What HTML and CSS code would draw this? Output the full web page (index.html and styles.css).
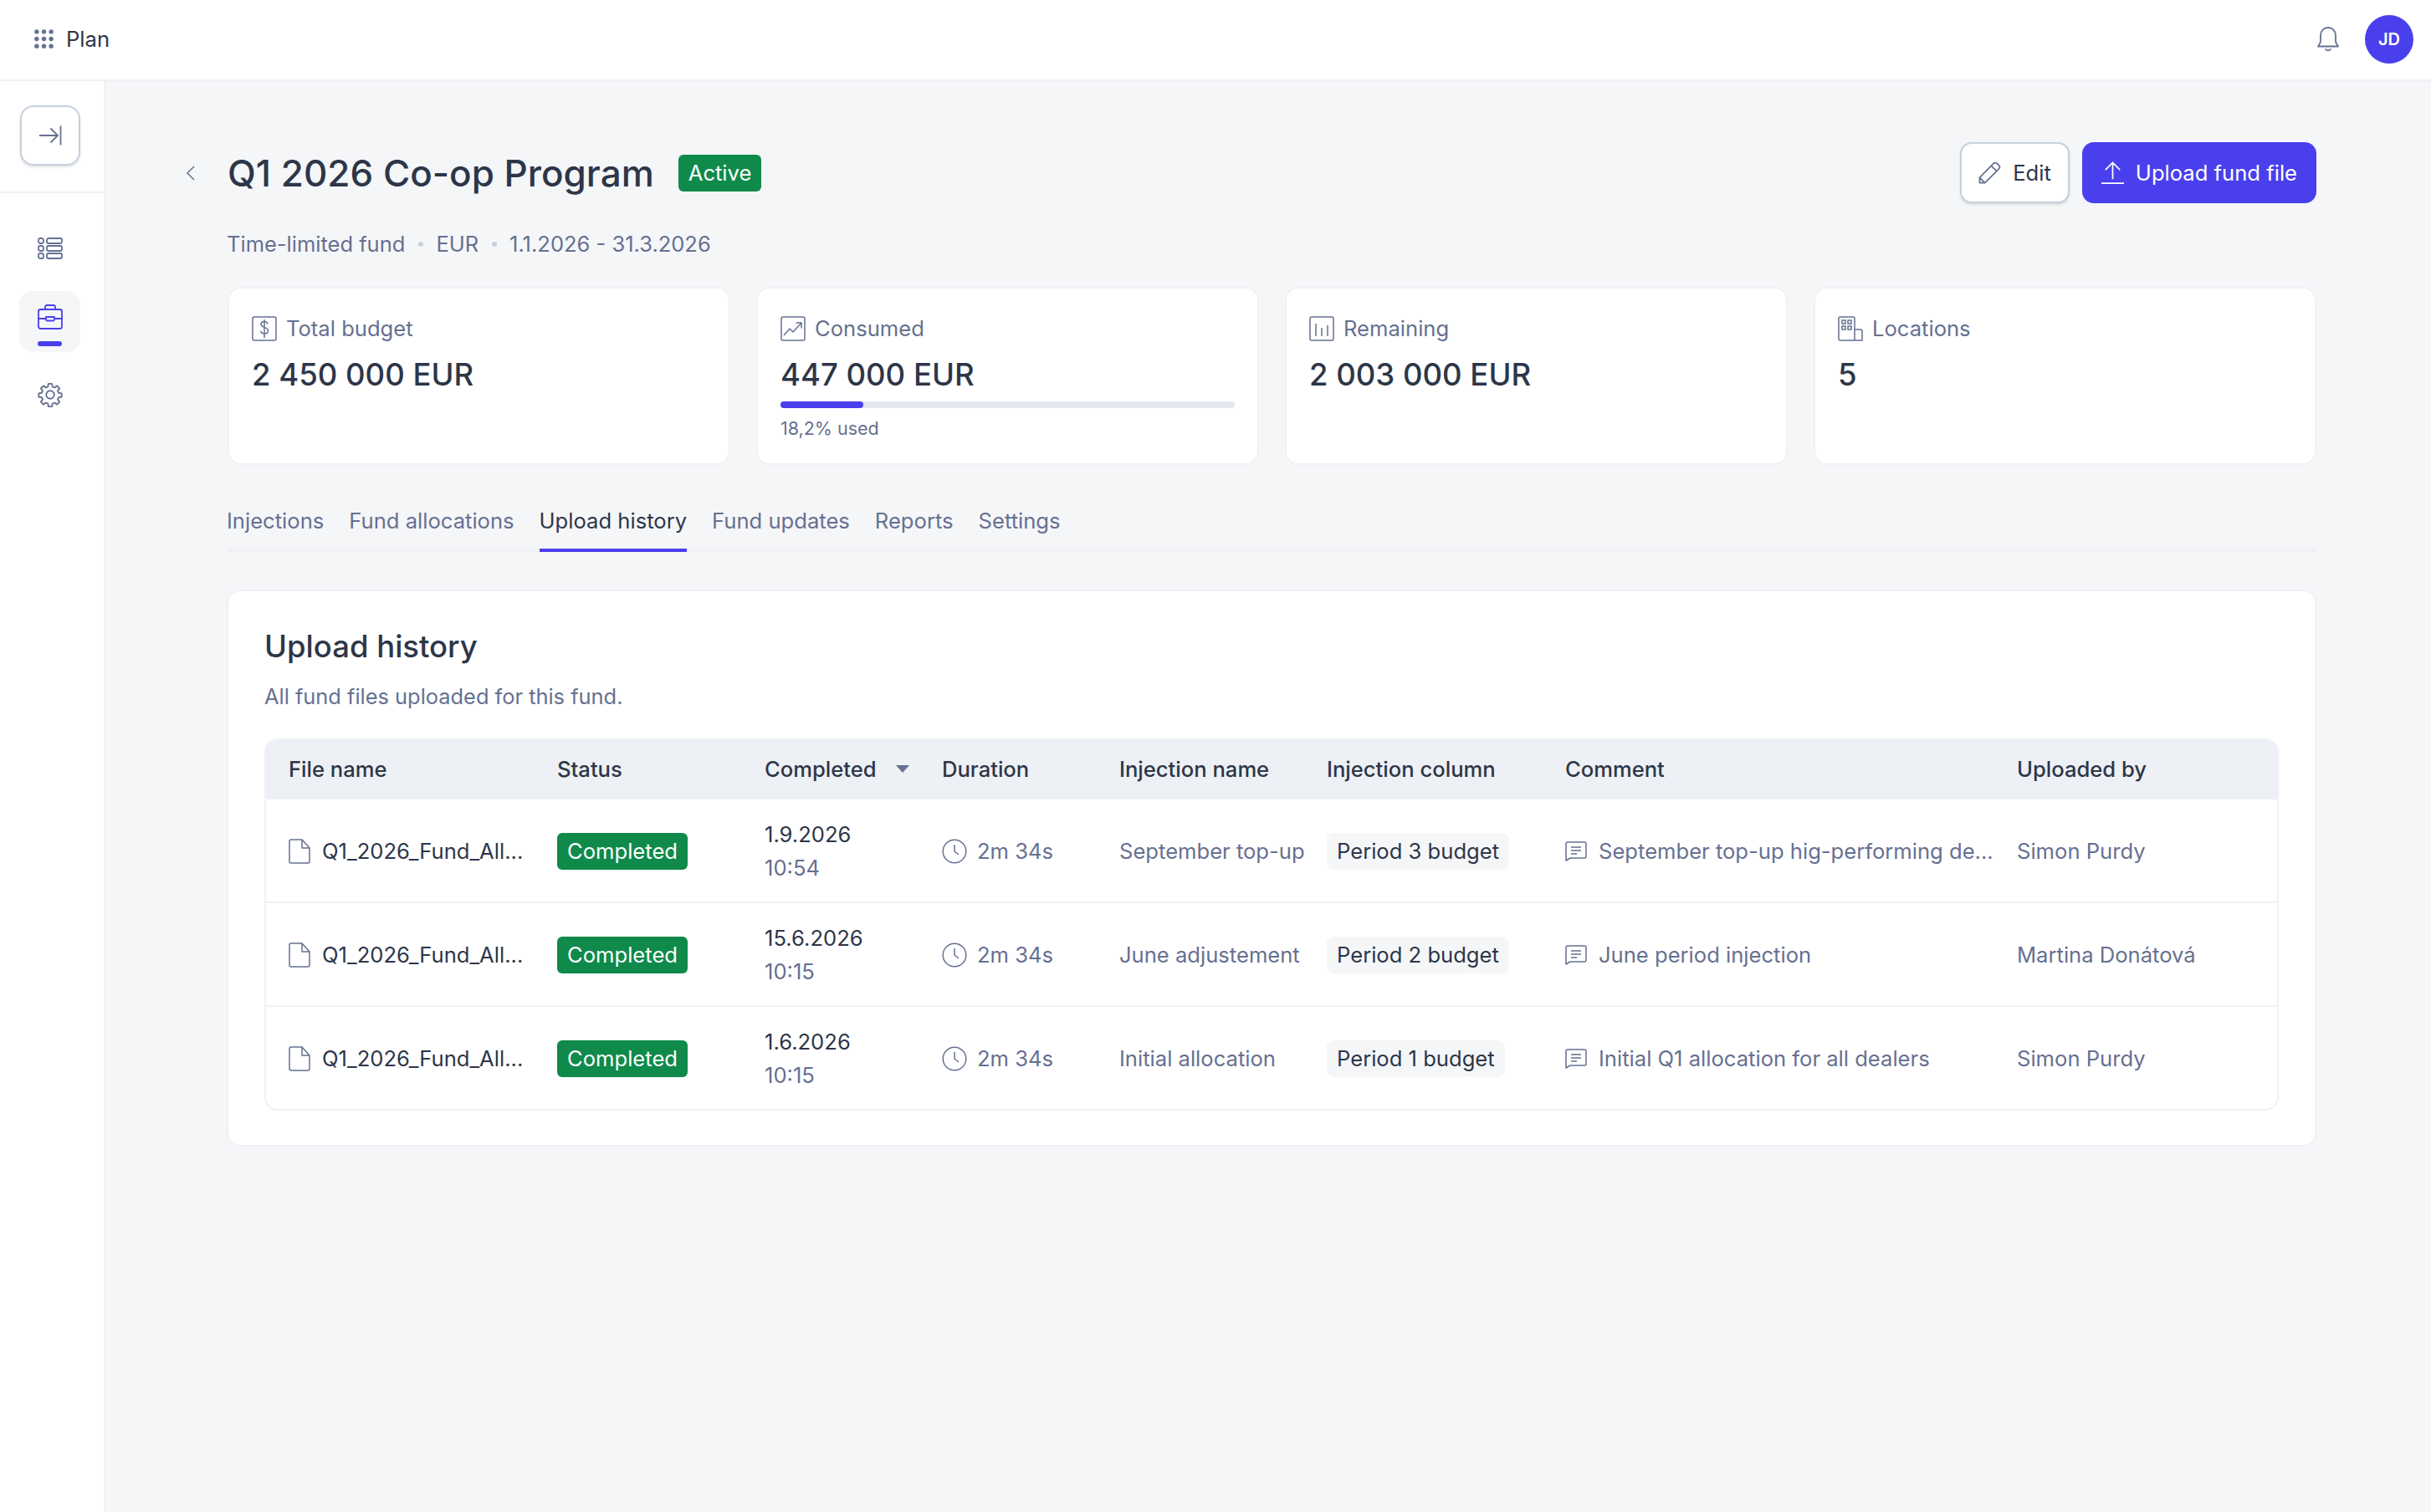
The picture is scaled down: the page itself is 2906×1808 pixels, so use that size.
FILE: index.html
```html
<!DOCTYPE html>
<html>
  <head>
    <meta charset="UTF-8">
    <meta name="viewport" content="width=device-width, initial-scale=1.0">
    <title>Q1 2026 Co-op Program</title>
    <link rel="stylesheet" href="styles.css">
  </head>
  <body>
    <header class="topbar">
      <div class="app">
        <svg class="appIcon" viewBox="0 0 24 24" fill="currentColor">
          <circle cx="3" cy="3" r="2.800"/><circle cx="12" cy="3" r="2.800"/><circle cx="21" cy="3" r="2.800"/>
          <circle cx="3" cy="12" r="2.800"/><circle cx="12" cy="12" r="2.800"/><circle cx="21" cy="12" r="2.800"/>
          <circle cx="3" cy="21" r="2.800"/><circle cx="12" cy="21" r="2.800"/><circle cx="21" cy="21" r="2.800"/>
        </svg>
        <span>Plan</span>
      </div>
      <div class="user">
        <svg class="bell" viewBox="1 2 26 30" fill="none" stroke="currentColor" stroke-width="1.800" stroke-linejoin="round" stroke-linecap="round">
          <path d="M2 25.500c0-1 3-3 3-6.500v-7a9 9 0 0 1 18 0v7c0 3.500 3 5.500 3 6.500z"/>
          <path d="M11 29c1.500 1.800 4.500 1.800 6 0"/>
        </svg>
        <span class="avatar">JD</span>
      </div>
    </header>

    <div class="layout">
      <aside class="sidebar">
        <div class="sideTop">
          <a href="javascript:;" class="collapse">
            <svg viewBox="0 0 28 28" fill="none" stroke="currentColor" stroke-width="1.800">
              <path d="M1 14h22M14.500 5.500l8.500 8.500-8.500 8.500M26.500 2.500v23"/>
            </svg>
          </a>
        </div>
        <nav class="sideNav">
          <a href="javascript:;" class="sideItem">
            <svg class="iconList" viewBox="0 0 30 26" fill="none" stroke="currentColor" stroke-width="1.800">
              <rect x="1" y="1" width="6" height="6" rx="2"/><rect x="1" y="10" width="6" height="6" rx="2"/><rect x="1" y="19" width="6" height="6" rx="2"/>
              <rect x="11" y="1" width="18" height="6" rx="2"/><rect x="11" y="10" width="18" height="6" rx="2"/><rect x="11" y="19" width="18" height="6" rx="2"/>
            </svg>
          </a>
          <a href="javascript:;" class="sideItem active">
            <svg viewBox="0 0 30 30" fill="none" stroke="currentColor" stroke-width="1.800" stroke-linejoin="round">
              <path d="M9 6V3a2 2 0 0 1 2-2h8a2 2 0 0 1 2 2v3"/>
              <rect x="1" y="6" width="28" height="23" rx="2.500"/>
              <path d="M1 17h9M20 17h9M10 15h10v3a1.500 1.500 0 0 1-1.500 1.500h-7A1.500 1.500 0 0 1 10 18z"/>
            </svg>
          </a>
          <a href="javascript:;" class="sideItem">
            <svg viewBox="0 0 24 24" fill="none" stroke="currentColor" stroke-width="1.500" stroke-linejoin="round">
              <path d="M10.300 1.500h3.400l.5 2.900 1.900.8 2.400-1.700 2.400 2.400-1.700 2.400.8 1.900 2.900.5v3.400l-2.900.5-.8 1.900 1.700 2.400-2.400 2.400-2.400-1.700-1.900.8-.5 2.900h-3.400l-.5-2.900-1.900-.8-2.400 1.700-2.400-2.400 1.700-2.400-.8-1.900-2.900-.5v-3.400l2.900-.5.8-1.900-1.700-2.400 2.400-2.400 2.400 1.700 1.900-.8z"/>
              <circle cx="12" cy="12" r="3.800"/>
            </svg>
          </a>
        </nav>
      </aside>

      <main class="main">
        <div class="pageHead">
          <div class="titleWrap">
            <a href="javascript:;" class="back">
              <svg viewBox="0 0 12 20" fill="none" stroke="currentColor" stroke-width="1.500"><path d="M10 2l-8 8 8 8"/></svg>
            </a>
            <h1>Q1 2026 Co-op Program</h1>
            <span class="badge">Active</span>
          </div>
          <div class="actions">
            <a href="javascript:;" class="btn btnEdit">
              <svg viewBox="0 0 28 28" fill="none" stroke="currentColor" stroke-width="1.800" stroke-linejoin="round">
                <path d="M1.500 26.500V20L18.500 2.800a3.400 3.400 0 0 1 4.800 0l1.900 1.900a3.400 3.400 0 0 1 0 4.800L8 26.500zM1.500 20L8 26.500M16 5.500l6.500 6.500"/>
              </svg>
              Edit
            </a>
            <a href="javascript:;" class="btn btnPrimary">
              <svg viewBox="0 0 28 28" fill="none" stroke="currentColor" stroke-width="1.800">
                <path d="M14 22V1.500M5 10.500l9-9 9 9M0 27h28"/>
              </svg>
              Upload fund file
            </a>
          </div>
        </div>

        <div class="meta">
          <span>Time-limited fund</span><i></i><span>EUR</span><i></i><span>1.1.2026 - 31.3.2026</span>
        </div>

        <section class="cards">
          <div class="card">
            <div class="cardLabel">
              <svg viewBox="0 0 30 30" fill="none" stroke="currentColor" stroke-width="1.500">
                <rect x="1" y="1" width="28" height="28" rx="2"/>
                <path d="M19 9.500c-.5-2-2-3-4-3-2.500 0-4 1.300-4 3.300 0 4.500 8.500 2.700 8.500 7.700 0 2.300-2 3.500-4.500 3.500s-4-1.200-4.500-3.300M15 4v22"/>
              </svg>
              Total budget
            </div>
            <div class="cardValue">2 450 000 EUR</div>
          </div>
          <div class="card">
            <div class="cardLabel">
              <svg viewBox="0 0 30 30" fill="none" stroke="currentColor" stroke-width="1.500">
                <rect x="1" y="1" width="28" height="28" rx="2"/>
                <path d="M4 23l7-8 4 4 10-11M18.500 8H25v6.500"/>
              </svg>
              Consumed
            </div>
            <div class="cardValue">447 000 EUR</div>
            <div class="progress"><div class="progressFill" style="width: 18.2%"></div></div>
            <div class="cardNote">18,2% used</div>
          </div>
          <div class="card">
            <div class="cardLabel">
              <svg viewBox="0 0 30 30" fill="none" stroke="currentColor" stroke-width="1.500">
                <rect x="1" y="1" width="28" height="28" rx="2"/>
                <path d="M8 9v15M15 14v10M22 11v13"/>
              </svg>
              Remaining
            </div>
            <div class="cardValue">2 003 000 EUR</div>
          </div>
          <div class="card">
            <div class="cardLabel">
              <svg viewBox="0 0 30 30" fill="none" stroke="currentColor" stroke-width="1.500">
                <path d="M20 29V3a2 2 0 0 0-2-2H3a2 2 0 0 0-2 2v24a2 2 0 0 0 2 2h26V18a2 2 0 0 0-2-2h-7"/>
                <rect x="5" y="5" width="4" height="4"/><rect x="12" y="5" width="4" height="4"/>
                <rect x="5" y="12" width="4" height="4"/><rect x="12" y="12" width="4" height="4"/>
              </svg>
              Locations
            </div>
            <div class="cardValue">5</div>
          </div>
        </section>

        <nav class="tabs">
          <a href="javascript:;">Injections</a>
          <a href="javascript:;">Fund allocations</a>
          <a href="javascript:;" class="on">Upload history</a>
          <a href="javascript:;">Fund updates</a>
          <a href="javascript:;">Reports</a>
          <a href="javascript:;">Settings</a>
        </nav>

        <section class="panel">
          <h2>Upload history</h2>
          <p class="panelSub">All fund files uploaded for this fund.</p>
          <div class="tableWrap">
            <table>
              <colgroup>
                <col class="colFile"><col class="colStatus"><col class="colDone"><col class="colDuration">
                <col class="colName"><col class="colColumn"><col class="colComment"><col class="colUser">
              </colgroup>
              <thead>
                <tr>
                  <th>File name</th>
                  <th>Status</th>
                  <th><span class="sort">Completed<b></b></span></th>
                  <th>Duration</th>
                  <th>Injection name</th>
                  <th>Injection column</th>
                  <th>Comment</th>
                  <th>Uploaded by</th>
                </tr>
              </thead>
              <tbody>
                <tr>
                  <td>
                    <div class="cellIcon fileName">
                      <svg class="iconFile" viewBox="0 0 26 30" fill="none" stroke="#667091" stroke-width="1.500" stroke-linejoin="round"><path d="M1 3a2 2 0 0 1 2-2h13l9 10v16a2 2 0 0 1-2 2H3a2 2 0 0 1-2-2zM16 1v10h9"/></svg>
                      Q1_2026_Fund_All...
                    </div>
                  </td>
                  <td><span class="badge">Completed</span></td>
                  <td><div class="date">1.9.2026</div><div class="time">10:54</div></td>
                  <td>
                    <div class="cellIcon muted">
                      <svg class="iconClock" viewBox="0 0 30 30" fill="none" stroke="currentColor" stroke-width="1.500"><circle cx="15" cy="15" r="13.800"/><path d="M15 7v8l5 4"/></svg>
                      2m 34s
                    </div>
                  </td>
                  <td class="muted">September top-up</td>
                  <td><span class="chip">Period 3 budget</span></td>
                  <td>
                    <div class="cellIcon muted">
                      <svg class="iconNote" viewBox="0 0 26 24" fill="none" stroke="currentColor" stroke-width="1.500" stroke-linejoin="round"><path d="M3 1h20a2 2 0 0 1 2 2v15a2 2 0 0 1-2 2H6l-5 3V3a2 2 0 0 1 2-2zM7 7h12M7 11h12M7 15h7"/></svg>
                      September top-up hig-performing de...
                    </div>
                  </td>
                  <td class="muted">Simon Purdy</td>
                </tr>
                <tr>
                  <td>
                    <div class="cellIcon fileName">
                      <svg class="iconFile" viewBox="0 0 26 30" fill="none" stroke="#667091" stroke-width="1.500" stroke-linejoin="round"><path d="M1 3a2 2 0 0 1 2-2h13l9 10v16a2 2 0 0 1-2 2H3a2 2 0 0 1-2-2zM16 1v10h9"/></svg>
                      Q1_2026_Fund_All...
                    </div>
                  </td>
                  <td><span class="badge">Completed</span></td>
                  <td><div class="date">15.6.2026</div><div class="time">10:15</div></td>
                  <td>
                    <div class="cellIcon muted">
                      <svg class="iconClock" viewBox="0 0 30 30" fill="none" stroke="currentColor" stroke-width="1.500"><circle cx="15" cy="15" r="13.800"/><path d="M15 7v8l5 4"/></svg>
                      2m 34s
                    </div>
                  </td>
                  <td class="muted">June adjustement</td>
                  <td><span class="chip">Period 2 budget</span></td>
                  <td>
                    <div class="cellIcon muted">
                      <svg class="iconNote" viewBox="0 0 26 24" fill="none" stroke="currentColor" stroke-width="1.500" stroke-linejoin="round"><path d="M3 1h20a2 2 0 0 1 2 2v15a2 2 0 0 1-2 2H6l-5 3V3a2 2 0 0 1 2-2zM7 7h12M7 11h12M7 15h7"/></svg>
                      June period injection
                    </div>
                  </td>
                  <td class="muted">Martina Donátová</td>
                </tr>
                <tr>
                  <td>
                    <div class="cellIcon fileName">
                      <svg class="iconFile" viewBox="0 0 26 30" fill="none" stroke="#667091" stroke-width="1.500" stroke-linejoin="round"><path d="M1 3a2 2 0 0 1 2-2h13l9 10v16a2 2 0 0 1-2 2H3a2 2 0 0 1-2-2zM16 1v10h9"/></svg>
                      Q1_2026_Fund_All...
                    </div>
                  </td>
                  <td><span class="badge">Completed</span></td>
                  <td><div class="date">1.6.2026</div><div class="time">10:15</div></td>
                  <td>
                    <div class="cellIcon muted">
                      <svg class="iconClock" viewBox="0 0 30 30" fill="none" stroke="currentColor" stroke-width="1.500"><circle cx="15" cy="15" r="13.800"/><path d="M15 7v8l5 4"/></svg>
                      2m 34s
                    </div>
                  </td>
                  <td class="muted">Initial allocation</td>
                  <td><span class="chip">Period 1 budget</span></td>
                  <td>
                    <div class="cellIcon muted">
                      <svg class="iconNote" viewBox="0 0 26 24" fill="none" stroke="currentColor" stroke-width="1.500" stroke-linejoin="round"><path d="M3 1h20a2 2 0 0 1 2 2v15a2 2 0 0 1-2 2H6l-5 3V3a2 2 0 0 1 2-2zM7 7h12M7 11h12M7 15h7"/></svg>
                      Initial Q1 allocation for all dealers
                    </div>
                  </td>
                  <td class="muted">Simon Purdy</td>
                </tr>
              </tbody>
            </table>
          </div>
        </section>
      </main>
    </div>
  </body>
</html>
```

FILE: styles.css
```css
* {
  margin: 0;
  padding: 0;
  box-sizing: border-box;
}

a {
  text-decoration: none;
  color: inherit;
}

svg {
  display: block;
  flex-shrink: 0;
}

body {
  height: 1808px;
  overflow: hidden;
  background-color: #f5f6f8;
  color: #2d3648;
  font-family: Inter, "Liberation Sans", sans-serif;
  font-size: 25.6px;
  line-height: 40px;
}

.topbar {
  display: flex;
  justify-content: space-between;
  align-items: center;
  height: 97px;
  padding: 0 21px 2px 41px;
  background-color: #fff;
  border-bottom: 2px solid #eff1f5;
}
.app {
  display: flex;
  align-items: center;
  gap: 15px;
}
.appIcon {
  width: 23px;
  height: 23px;
  color: #667091;
}
.user {
  display: flex;
  align-items: center;
  gap: 31px;
}
.bell {
  width: 26px;
  height: 30px;
  color: #667091;
}
.avatar {
  display: flex;
  align-items: center;
  justify-content: center;
  width: 58px;
  height: 58px;
  border-radius: 50%;
  background-color: #4a3fed;
  color: #fff;
  font-size: 20px;
  font-weight: 600;
}

.layout {
  display: flex;
  height: 1711px;
}
.sidebar {
  flex: 0 0 126px;
  background-color: #fff;
  border-right: 2px solid #eff1f5;
}
.sideTop {
  height: 134px;
  padding: 29px 24px 0;
  border-bottom: 2px solid #eff1f5;
}
.collapse {
  display: flex;
  align-items: center;
  justify-content: center;
  width: 72px;
  height: 72px;
  border: 2px solid #c6d0dd;
  border-radius: 16px;
  box-shadow: 0 2px 3px rgba(45, 54, 72, 0.14);
  color: #667091;
}
.collapse svg {
  width: 28px;
  height: 28px;
}
.sideNav {
  display: flex;
  flex-direction: column;
  gap: 14.500px;
  padding: 29px 0 0 23px;
}
.sideItem {
  position: relative;
  display: flex;
  align-items: center;
  justify-content: center;
  width: 73px;
  height: 73px;
  border-radius: 16px;
  color: #667091;
}
.sideItem svg {
  width: 30px;
  height: 30px;
}
.sideItem.active {
  background-color: #f5f6f8;
  color: #4a3fed;
}
.sideItem.active svg {
  margin-bottom: 11px;
}
.sideItem.active::after {
  content: "";
  position: absolute;
  left: 22px;
  bottom: 7px;
  width: 29px;
  height: 6px;
  border-radius: 3px;
  background-color: #4a3fed;
}

.main {
  flex: 1;
  padding: 73px 137px 0 145px;
}
.pageHead {
  display: flex;
  justify-content: space-between;
  align-items: center;
  height: 73px;
}
.titleWrap {
  display: flex;
  align-items: center;
}
.back {
  display: block;
  width: 12px;
  margin-left: -49px;
  margin-right: 38px;
  color: #667091;
}
.back svg {
  width: 12px;
  height: 20px;
}
h1 {
  margin-right: 29px;
  font-size: 44px;
  line-height: 56px;
  font-weight: 500;
}
.badge {
  display: inline-block;
  height: 44px;
  padding: 0 12px;
  border-radius: 6px;
  background-color: #0f8a4b;
  color: #fff;
  line-height: 44px;
}
.actions {
  display: flex;
  gap: 15px;
}
.btn {
  display: flex;
  align-items: center;
  gap: 14px;
  height: 73px;
  border-radius: 14px;
}
.btn svg {
  width: 27px;
  height: 27px;
}
.btnEdit {
  padding: 0 20px;
  background-color: #fff;
  border: 2px solid #c6d0dd;
  box-shadow: 0 2px 3px rgba(45, 54, 72, 0.14);
}
.btnEdit svg {
  color: #667091;
}
.btnPrimary {
  padding: 0 23px;
  background-color: #4a3fed;
  color: #fff;
}

.meta {
  display: flex;
  align-items: center;
  margin-top: 29px;
  color: #667091;
  font-size: 25.500px;
}
.meta i {
  width: 6px;
  height: 6px;
  margin: 0 15.500px;
  border-radius: 50%;
  background-color: #c6d0dd;
}

.cards {
  display: grid;
  grid-template-columns: repeat(4, 1fr);
  gap: 31px;
  margin: 31px 0 0 1px;
}
.card {
  height: 213px;
  padding: 28px 27px 0;
  background-color: #fff;
  border: 2px solid #eff1f5;
  border-radius: 16px;
}
.cardLabel {
  display: flex;
  align-items: center;
  gap: 11px;
  color: #667091;
}
.cardLabel svg {
  width: 30px;
  height: 30px;
}
.cardValue {
  margin-top: 7px;
  font-size: 36.500px;
  line-height: 56px;
  font-weight: 500;
}
.progress {
  height: 8px;
  margin-top: 4px;
  border-radius: 4px;
  background-color: #e3e8ee;
}
.progressFill {
  height: 8px;
  border-radius: 4px;
  background-color: #4a3fed;
}
.cardNote {
  margin-top: 7px;
  color: #667091;
  font-size: 21.500px;
  line-height: 34px;
}

.tabs {
  display: flex;
  gap: 30px;
  margin-top: 29px;
  border-bottom: 4px solid #eff1f5;
}
.tabs a {
  height: 75px;
  margin-bottom: -4px;
  padding-top: 18px;
  color: #667091;
  border-bottom: 4px solid transparent;
}
.tabs a.on {
  color: #2d3648;
  border-bottom-color: #4a3fed;
}

.panel {
  margin-top: 45px;
  padding: 38px 43px 41px;
  background-color: #fff;
  border: 2px solid #eff1f5;
  border-radius: 16px;
}
h2 {
  font-size: 36.500px;
  line-height: 56px;
  font-weight: 500;
}
.panelSub {
  margin-top: 12px;
  color: #667091;
  font-size: 25.400px;
}
.tableWrap {
  height: 445px;
  margin-top: 30px;
  border: 2px solid #eff1f5;
  border-radius: 16px;
  overflow: hidden;
}
table {
  width: 100%;
  table-layout: fixed;
  border-collapse: separate;
  border-spacing: 0;
}
.colFile { width: 321px; }
.colStatus { width: 248px; }
.colDone { width: 212px; }
.colDuration { width: 212px; }
.colName { width: 248px; }
.colColumn { width: 285px; }
.colComment { width: 540px; }
th {
  height: 71px;
  padding: 0 28px 2px 27px;
  background-color: #edf0f4;
  font-weight: 500;
  text-align: left;
}
.sort {
  display: flex;
  align-items: center;
  gap: 23px;
}
.sort b {
  width: 0;
  height: 0;
  border-left: 8px solid transparent;
  border-right: 8px solid transparent;
  border-top: 9px solid #667091;
}
td {
  height: 124px;
  padding: 2px 28px 0 27px;
  border-bottom: 2px solid #eff1f5;
  white-space: nowrap;
}
.muted {
  color: #667091;
}
.cellIcon {
  display: flex;
  align-items: center;
  gap: 12px;
}
.iconFile {
  width: 26px;
  height: 30px;
  margin-right: 2px;
}
.iconClock {
  width: 30px;
  height: 30px;
}
.iconNote {
  width: 26px;
  height: 24px;
  margin-right: 2px;
}
.time {
  color: #667091;
}
.chip {
  display: inline-block;
  height: 44px;
  padding: 0 12px;
  border-radius: 8px;
  background-color: #f5f6f8;
  line-height: 44px;
}
```
